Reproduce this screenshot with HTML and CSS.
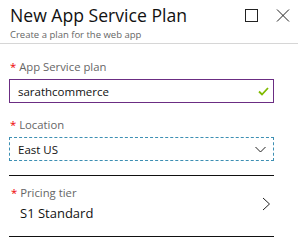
FILE: index.html
```html
<!DOCTYPE html>
<html lang="en">
<head>
  <meta charset="UTF-8" />
  <title>New App Service Plan</title>
  <link rel="stylesheet" href="styles.css">
</head>
<body>
  <div class="blade">
    <div class="blade-header">
      <div class="titles">
        <h1>New App Service Plan</h1>
        <p class="subtitle">Create a plan for the web app</p>
      </div>
      <div class="actions">
        <svg width="14" height="14" viewBox="0 0 14 14"><rect x="0.5" y="0.5" width="12" height="12" fill="none" stroke="#222" stroke-width="1"/></svg>
        <svg width="14" height="14" viewBox="0 0 14 14"><path d="M1 0.5 L13 12.5 M13 0.5 L1 12.5" stroke="#222" stroke-width="1" fill="none"/></svg>
      </div>
    </div>

    <div class="content">
      <div class="field">
        <div class="label"><span class="req">*</span> App Service plan</div>
        <div class="box valid">
          <span>sarathcommerce</span>
          <svg width="11" height="9" viewBox="0 0 11 9"><path d="M1 4.5 L4 7.5 L10 1" stroke="#7fba00" stroke-width="1.8" fill="none"/></svg>
        </div>
      </div>

      <div class="field">
        <div class="label"><span class="req">*</span> Location</div>
        <div class="box focused">
          <span>East US</span>
          <svg width="11" height="7" viewBox="0 0 11 7"><path d="M0.5 1 L5.5 6 L10.5 1" stroke="#222" stroke-width="1" fill="none"/></svg>
        </div>
      </div>

      <div class="picker">
        <div>
          <div class="label"><span class="req">*</span> Pricing tier</div>
          <div class="value">S1 Standard</div>
        </div>
        <svg class="chevron" width="9" height="14" viewBox="0 0 9 14"><path d="M1 1 L7.5 7 L1 13" stroke="#222" stroke-width="1" fill="none"/></svg>
      </div>
    </div>
  </div>
</body>
</html>
```

FILE: styles.css
```css
body {
  margin: 0;
  background: #fff;
  font-family: "Open Sans", "Noto Sans", sans-serif;
  color: #222;
}
.blade-header {
  display: flex;
  justify-content: space-between;
  align-items: flex-start;
  padding: 4px 8px 0 10px;
  height: 39px;
  border-bottom: 1px solid #d6d6d6;
  margin-right: 1px;
}
h1 {
  margin: 0;
  font-size: 17.6px;
  font-weight: 400;
  line-height: 22px;
  color: #111;
}
.subtitle {
  margin: 2px 0 0;
  font-size: 9.5px;
  color: #666;
}
.actions {
  display: flex;
  gap: 17px;
  padding-top: 5px;
}
.content {
  padding: 15px 25px 0 9px;
}
.field {
  margin-bottom: 14px;
}
.label {
  font-size: 11.3px;
  color: #666;
  line-height: 16px;
  margin-bottom: 4px;
  padding-left: 1px;
}
.req {
  color: #e00;
}
.box {
  display: flex;
  justify-content: space-between;
  align-items: center;
  height: 22px;
  padding: 0 4px 0 8px;
  font-size: 11.5px;
  color: #111;
}
.box.valid {
  border: 1px solid #6b2d83;
}
.box.focused {
  border: 1px dashed #3d8fb3;
  padding-right: 7px;
}
.picker {
  display: flex;
  justify-content: space-between;
  align-items: flex-start;
  height: 51px;
  padding: 9px 3px 0 1px;
  border-top: 1px solid #111;
  border-bottom: 1px solid #111;
}
.picker .label {
  margin-bottom: 3px;
}
.value {
  font-size: 13px;
  line-height: 18px;
  color: #111;
  padding-left: 10px;
}
.chevron {
  margin-top: 12px;
}
```
